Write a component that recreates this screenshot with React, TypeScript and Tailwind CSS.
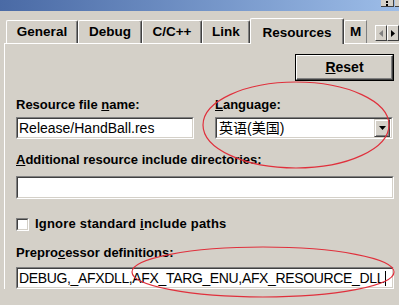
const face = { fontFamily: '"Liberation Sans", Arial, sans-serif' };
const cjk = { fontFamily: '"Liberation Sans", "Noto Sans CJK SC", sans-serif' };

function Tab({ label, width, active, clip }: { label: string; width: number; active?: boolean; clip?: boolean }) {
  return (
    <div
      style={{ width }}
      className={
        'flex shrink-0 justify-center border-l border-t border-white rounded-tl-[2px] text-[13.5px] font-bold ' +
        (active
          ? 'h-[26px] pt-[6px] border-r border-r-[#404040] shadow-[inset_-1px_0_0_#808080] rounded-tr-[2px] -mb-px bg-[#d4d0c8] relative z-10'
          : clip
            ? 'h-[23px] pt-[3px] border-r border-r-[#808080] overflow-hidden'
            : 'h-[23px] pt-[3px] border-r border-r-[#404040] shadow-[inset_-1px_0_0_#808080] rounded-tr-[2px]')
      }
    >
      <span className="leading-[16px]">{label}</span>
    </div>
  );
}

function Field({ children, className = '' }: { children?: React.ReactNode; className?: string }) {
  return (
    <div
      className={
        'flex items-center border border-t-[#808080] border-l-[#808080] border-b-white border-r-white ' + className
      }
    >
      <div className="flex h-full w-full items-center border border-t-[#404040] border-l-[#404040] border-b-[#d4d0c8] border-r-[#d4d0c8] bg-white pl-[1px]">
        {children}
      </div>
    </div>
  );
}

export default function App() {
  return (
    <div style={face} className="relative h-[305px] w-[399px] overflow-hidden bg-[#d4d0c8] text-black">
      <div className="flex h-[11px] justify-end bg-gradient-to-r from-[#4a6aa5] to-[#9dbde8]">
        <div className="flex h-[7px] w-[13px] flex-col items-center justify-center gap-px border-b border-r border-[#404040] bg-[#d4d0c8]">
          <div className="h-[2px] w-[2px] bg-black" />
          <div className="h-[2px] w-[2px] bg-black" />
        </div>
        <div className="ml-px h-[7px] w-[4px] border-b border-[#404040] bg-[#d4d0c8]" />
      </div>

      <div className="flex h-[32px] items-end pl-[6px]">
        <Tab label="General" width={72} />
        <Tab label="Debug" width={64} />
        <Tab label="C/C++" width={60} />
        <Tab label="Link" width={48} />
        <Tab label="Resources" width={94} active />
        <Tab label="M" width={23} clip />
        <div className="mb-px ml-[8px] flex self-end pb-[1px]">
          <div className="flex h-[16px] w-[12px] items-center justify-center border border-t-white border-l-white border-b-[#404040] border-r-[#404040]">
            <svg width="4" height="7" viewBox="0 0 4 7">
              <path d="M4 0v7L0 3.5z" fill="#808080" />
            </svg>
          </div>
          <div className="flex h-[16px] w-[12px] items-center justify-center border border-t-white border-l-white border-b-[#404040] border-r-[#404040]">
            <svg width="4" height="7" viewBox="0 0 4 7">
              <path d="M0 0v7L4 3.5z" fill="black" />
            </svg>
          </div>
        </div>
      </div>

      <div className="ml-[4px] border-l border-t border-white pl-[11px] pr-[5px]">
        <div className="mt-[10px] flex justify-end">
          <div className="flex h-[27px] w-[99px] border border-black">
            <div className="flex w-full items-center justify-center border border-t-white border-l-white border-b-[#404040] border-r-[#404040] shadow-[inset_-1px_-1px_0_#808080] text-[14px] font-bold">
              <span>
                <span className="underline">R</span>eset
              </span>
            </div>
          </div>
        </div>

        <div className="mt-[16px] grid grid-cols-[178px_178px] gap-x-[21px]">
          <div className="flex flex-col">
            <div className="h-[16px] text-[13px] font-bold leading-[16px]">
              Resource file <span className="underline">n</span>ame:
            </div>
            <Field className="mt-[4px] h-[22px]">
              <span className="text-[14px] leading-[16px]">Release/HandBall.res</span>
            </Field>
          </div>
          <div className="flex flex-col">
            <div className="h-[16px] text-[13px] font-bold leading-[16px]">
              <span className="underline">L</span>anguage:
            </div>
            <Field className="mt-[4px] h-[22px]">
              <span style={cjk} className="flex-1 pl-[1px] text-[14px] leading-[16px]">
                英语(美国)
              </span>
              <div className="mr-px flex h-[18px] w-[16px] items-center justify-center border border-t-[#d4d0c8] border-l-[#d4d0c8] border-b-[#404040] border-r-[#404040] bg-[#d4d0c8] shadow-[inset_1px_1px_0_white,inset_-1px_-1px_0_#808080]">
                <svg width="7" height="4" viewBox="0 0 7 4">
                  <path d="M0 0h7L3.5 4z" fill="black" />
                </svg>
              </div>
            </Field>
          </div>
        </div>

        <div className="mt-[13px] h-[16px] text-[13px] font-bold leading-[16px]">
          <span className="underline">A</span>dditional resource include directories:
        </div>
        <Field className="mt-[8px] h-[23px]" />

        <div className="mt-[17px] flex h-[16px] items-center gap-[6px]">
          <div className="h-[13px] w-[13px] border border-t-[#808080] border-l-[#808080] border-b-white border-r-white">
            <div className="h-full w-full border border-t-[#404040] border-l-[#404040] border-b-[#d4d0c8] border-r-[#d4d0c8] bg-white" />
          </div>
          <span className="text-[13px] font-bold leading-[16px] tracking-[0.2px]">
            Ignore standard <span className="underline">i</span>nclude paths
          </span>
        </div>

        <div className="mt-[13px] h-[16px] text-[13px] font-bold leading-[16px]">
          Prepro<span className="underline">c</span>essor definitions:
        </div>
        <Field className="mt-[6px] h-[22px]">
          <span className="text-[14px] leading-[16px] tracking-[-0.35px]">
            DEBUG,_AFXDLL,AFX_TARG_ENU,AFX_RESOURCE_DLL
          </span>
          <span className="ml-[1px] h-[15px] w-px bg-black" />
        </Field>
      </div>

      <svg className="pointer-events-none absolute inset-0" width="399" height="305">
        <ellipse cx="296" cy="125" rx="93" ry="43" fill="none" stroke="#e0303c" strokeWidth="1.2" />
        <ellipse cx="263" cy="272" rx="131" ry="25" fill="none" stroke="#e0303c" strokeWidth="1.2" />
      </svg>
    </div>
  );
}
